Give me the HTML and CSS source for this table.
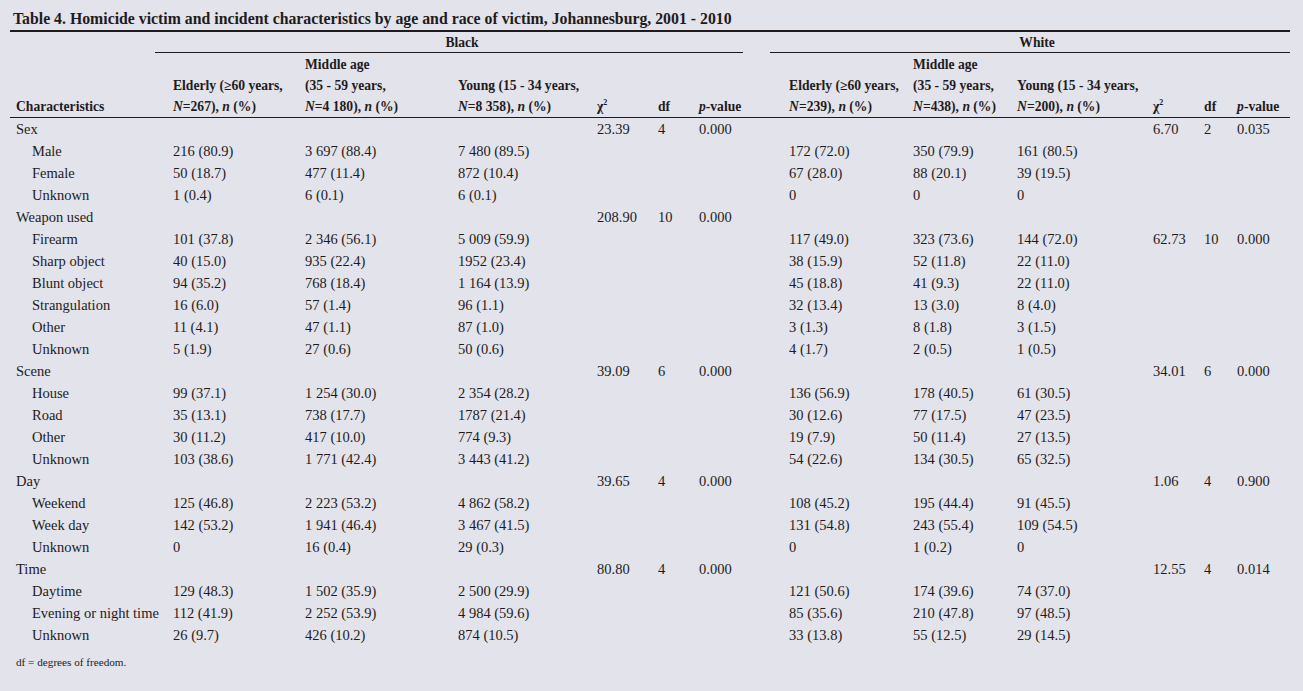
FILE: index.html
```html
<!DOCTYPE html>
<html>
<head>
<meta charset="utf-8">
<link rel="stylesheet" href="styles.css">
</head>
<body>
<div class="page">
  <div class="title">Table 4. Homicide victim and incident characteristics by age and race of victim, Johannesburg, 2001 - 2010</div>
  <table class="tbl">
    <colgroup>
      <col style="width:145px"><col style="width:144px"><col style="width:153px"><col style="width:139px"><col style="width:61px"><col style="width:41px"><col style="width:50px"><col style="width:27px"><col style="width:137px"><col style="width:104px"><col style="width:136px"><col style="width:51px"><col style="width:33px"><col style="width:59px">
    </colgroup>
    <thead>
      <tr class="grp">
        <th></th>
        <th colspan="6"><div class="grp-line black">Black</div></th>
        <th></th>
        <th colspan="6"><div class="grp-line white">White</div></th>
      </tr>
      <tr class="hdr">
        <th>Characteristics</th>
        <th class="g1">Elderly (≥60 years,<br><i>N</i>=267), <i>n</i> (%)</th>
        <th>Middle age<br>(35 - 59 years,<br><i>N</i>=4 180), <i>n</i> (%)</th>
        <th>Young (15 - 34 years,<br><i>N</i>=8 358), <i>n</i> (%)</th>
        <th>χ<sup>2</sup></th>
        <th>df</th>
        <th><i>p</i>-value</th>
        <th></th>
        <th class="g2">Elderly (≥60 years,<br><i>N</i>=239), <i>n</i> (%)</th>
        <th>Middle age<br>(35 - 59 years,<br><i>N</i>=438), <i>n</i> (%)</th>
        <th>Young (15 - 34 years,<br><i>N</i>=200), <i>n</i> (%)</th>
        <th>χ<sup>2</sup></th>
        <th>df</th>
        <th><i>p</i>-value</th>
      </tr>
    </thead>
    <tbody>
      <tr><td>Sex</td><td class="g1"></td><td></td><td></td><td>23.39</td><td>4</td><td>0.000</td><td></td><td class="g2"></td><td></td><td></td><td>6.70</td><td>2</td><td>0.035</td></tr>
      <tr><td class="sub">Male</td><td class="g1">216 (80.9)</td><td>3 697 (88.4)</td><td>7 480 (89.5)</td><td></td><td></td><td></td><td></td><td class="g2">172 (72.0)</td><td>350 (79.9)</td><td>161 (80.5)</td><td></td><td></td><td></td></tr>
      <tr><td class="sub">Female</td><td class="g1">50 (18.7)</td><td>477 (11.4)</td><td>872 (10.4)</td><td></td><td></td><td></td><td></td><td class="g2">67 (28.0)</td><td>88 (20.1)</td><td>39 (19.5)</td><td></td><td></td><td></td></tr>
      <tr><td class="sub">Unknown</td><td class="g1">1 (0.4)</td><td>6 (0.1)</td><td>6 (0.1)</td><td></td><td></td><td></td><td></td><td class="g2">0</td><td>0</td><td>0</td><td></td><td></td><td></td></tr>
      <tr><td>Weapon used</td><td class="g1"></td><td></td><td></td><td>208.90</td><td>10</td><td>0.000</td><td></td><td class="g2"></td><td></td><td></td><td></td><td></td><td></td></tr>
      <tr><td class="sub">Firearm</td><td class="g1">101 (37.8)</td><td>2 346 (56.1)</td><td>5 009 (59.9)</td><td></td><td></td><td></td><td></td><td class="g2">117 (49.0)</td><td>323 (73.6)</td><td>144 (72.0)</td><td>62.73</td><td>10</td><td>0.000</td></tr>
      <tr><td class="sub">Sharp object</td><td class="g1">40 (15.0)</td><td>935 (22.4)</td><td>1952 (23.4)</td><td></td><td></td><td></td><td></td><td class="g2">38 (15.9)</td><td>52 (11.8)</td><td>22 (11.0)</td><td></td><td></td><td></td></tr>
      <tr><td class="sub">Blunt object</td><td class="g1">94 (35.2)</td><td>768 (18.4)</td><td>1 164 (13.9)</td><td></td><td></td><td></td><td></td><td class="g2">45 (18.8)</td><td>41 (9.3)</td><td>22 (11.0)</td><td></td><td></td><td></td></tr>
      <tr><td class="sub">Strangulation</td><td class="g1">16 (6.0)</td><td>57 (1.4)</td><td>96 (1.1)</td><td></td><td></td><td></td><td></td><td class="g2">32 (13.4)</td><td>13 (3.0)</td><td>8 (4.0)</td><td></td><td></td><td></td></tr>
      <tr><td class="sub">Other</td><td class="g1">11 (4.1)</td><td>47 (1.1)</td><td>87 (1.0)</td><td></td><td></td><td></td><td></td><td class="g2">3 (1.3)</td><td>8 (1.8)</td><td>3 (1.5)</td><td></td><td></td><td></td></tr>
      <tr><td class="sub">Unknown</td><td class="g1">5 (1.9)</td><td>27 (0.6)</td><td>50 (0.6)</td><td></td><td></td><td></td><td></td><td class="g2">4 (1.7)</td><td>2 (0.5)</td><td>1 (0.5)</td><td></td><td></td><td></td></tr>
      <tr><td>Scene</td><td class="g1"></td><td></td><td></td><td>39.09</td><td>6</td><td>0.000</td><td></td><td class="g2"></td><td></td><td></td><td>34.01</td><td>6</td><td>0.000</td></tr>
      <tr><td class="sub">House</td><td class="g1">99 (37.1)</td><td>1 254 (30.0)</td><td>2 354 (28.2)</td><td></td><td></td><td></td><td></td><td class="g2">136 (56.9)</td><td>178 (40.5)</td><td>61 (30.5)</td><td></td><td></td><td></td></tr>
      <tr><td class="sub">Road</td><td class="g1">35 (13.1)</td><td>738 (17.7)</td><td>1787 (21.4)</td><td></td><td></td><td></td><td></td><td class="g2">30 (12.6)</td><td>77 (17.5)</td><td>47 (23.5)</td><td></td><td></td><td></td></tr>
      <tr><td class="sub">Other</td><td class="g1">30 (11.2)</td><td>417 (10.0)</td><td>774 (9.3)</td><td></td><td></td><td></td><td></td><td class="g2">19 (7.9)</td><td>50 (11.4)</td><td>27 (13.5)</td><td></td><td></td><td></td></tr>
      <tr><td class="sub">Unknown</td><td class="g1">103 (38.6)</td><td>1 771 (42.4)</td><td>3 443 (41.2)</td><td></td><td></td><td></td><td></td><td class="g2">54 (22.6)</td><td>134 (30.5)</td><td>65 (32.5)</td><td></td><td></td><td></td></tr>
      <tr><td>Day</td><td class="g1"></td><td></td><td></td><td>39.65</td><td>4</td><td>0.000</td><td></td><td class="g2"></td><td></td><td></td><td>1.06</td><td>4</td><td>0.900</td></tr>
      <tr><td class="sub">Weekend</td><td class="g1">125 (46.8)</td><td>2 223 (53.2)</td><td>4 862 (58.2)</td><td></td><td></td><td></td><td></td><td class="g2">108 (45.2)</td><td>195 (44.4)</td><td>91 (45.5)</td><td></td><td></td><td></td></tr>
      <tr><td class="sub">Week day</td><td class="g1">142 (53.2)</td><td>1 941 (46.4)</td><td>3 467 (41.5)</td><td></td><td></td><td></td><td></td><td class="g2">131 (54.8)</td><td>243 (55.4)</td><td>109 (54.5)</td><td></td><td></td><td></td></tr>
      <tr><td class="sub">Unknown</td><td class="g1">0</td><td>16 (0.4)</td><td>29 (0.3)</td><td></td><td></td><td></td><td></td><td class="g2">0</td><td>1 (0.2)</td><td>0</td><td></td><td></td><td></td></tr>
      <tr><td>Time</td><td class="g1"></td><td></td><td></td><td>80.80</td><td>4</td><td>0.000</td><td></td><td class="g2"></td><td></td><td></td><td>12.55</td><td>4</td><td>0.014</td></tr>
      <tr><td class="sub">Daytime</td><td class="g1">129 (48.3)</td><td>1 502 (35.9)</td><td>2 500 (29.9)</td><td></td><td></td><td></td><td></td><td class="g2">121 (50.6)</td><td>174 (39.6)</td><td>74 (37.0)</td><td></td><td></td><td></td></tr>
      <tr><td class="sub">Evening or night time</td><td class="g1">112 (41.9)</td><td>2 252 (53.9)</td><td>4 984 (59.6)</td><td></td><td></td><td></td><td></td><td class="g2">85 (35.6)</td><td>210 (47.8)</td><td>97 (48.5)</td><td></td><td></td><td></td></tr>
      <tr><td class="sub">Unknown</td><td class="g1">26 (9.7)</td><td>426 (10.2)</td><td>874 (10.5)</td><td></td><td></td><td></td><td></td><td class="g2">33 (13.8)</td><td>55 (12.5)</td><td>29 (14.5)</td><td></td><td></td><td></td></tr>
    </tbody>
  </table>
  <div class="foot">df = degrees of freedom.</div>
</div>
</body>
</html>
```
FILE: styles.css
```css
html, body {
  margin: 0;
  padding: 0;
  background: #e3e3eb;
}
body {
  font-family: "Liberation Serif", "Times New Roman", serif;
  color: #1f1b1c;
}
.page {
  width: 1280px;
  margin-left: 10px;
}
.title {
  font-weight: bold;
  font-size: 15.8px;
  line-height: 20px;
  padding: 9px 0 1px 3px;
  border-bottom: 2px solid #1f1b1c;
  white-space: nowrap;
}
.tbl {
  width: 1280px;
  table-layout: fixed;
  border-collapse: collapse;
  font-size: 14.5px;
}
.tbl th, .tbl td {
  padding: 0 0 0 6px;
  text-align: left;
  white-space: nowrap;
}
.tbl th {
  font-weight: bold;
  font-size: 13.6px;
}
.grp th {
  padding: 0;
  height: 21px;
}
.grp-line {
  height: 20px;
  line-height: 22px;
  border-bottom: 1px solid #1f1b1c;
  text-align: center;
}
.grp-line.black { padding-left: 26px; }
.grp-line.white { padding-left: 14px; }
.hdr th {
  vertical-align: bottom;
  line-height: 21px;
  padding-top: 1px;
  padding-bottom: 0;
  border-bottom: 1px solid #1f1b1c;
}
.hdr th i { font-weight: bold; }
.hdr sup { font-size: 8px; line-height: 0; vertical-align: 6px; }
.tbl td {
  height: 22px;
  line-height: 22px;
  vertical-align: middle;
}
.tbl .g1 { padding-left: 18px; }
.tbl .g2 { padding-left: 19px; }
.tbl td.sub { padding-left: 22px; }
.foot {
  font-size: 11.2px;
  line-height: 14px;
  margin-top: 9px;
  padding-left: 6px;
}
```
